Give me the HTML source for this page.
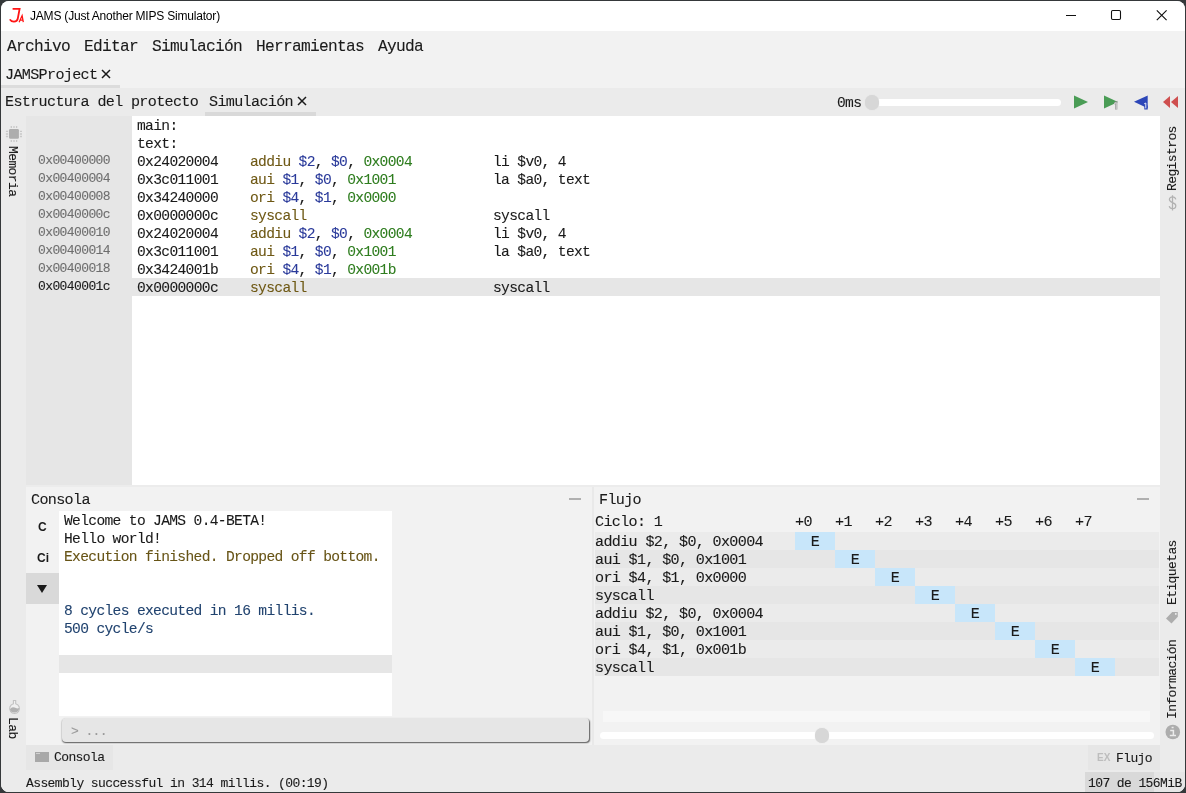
<!DOCTYPE html>
<html><head><meta charset="utf-8">
<style>
*{box-sizing:border-box;margin:0;padding:0}
html,body{width:1186px;height:793px;overflow:hidden;background:#35383a}
body{font-family:"Liberation Mono",monospace;color:#1a1a1a;position:relative}
.abs{position:absolute}
#win{position:absolute;left:1px;top:1px;width:1184px;height:791px;background:#f2f2f2;border-radius:8px;overflow:hidden}
.t{position:absolute;white-space:pre;line-height:18px;font-size:14.6px;letter-spacing:-0.66px;-webkit-text-stroke:0.1px currentColor;will-change:opacity;margin-top:1px}
.m{font-size:16.2px;letter-spacing:-0.72px}
.l{font-size:15.1px;letter-spacing:-0.66px}
.s{font-size:13px;letter-spacing:-0.6px}
.g{color:#6e6e6e}
.mn{color:#6e5814}.rg{color:#2a3a9a}.im{color:#2f7d1f}
.v{position:absolute;white-space:pre;font-size:13px;letter-spacing:-0.6px;line-height:14px;transform-origin:0 0;will-change:opacity;-webkit-text-stroke:0.1px currentColor}
.e{position:absolute;width:40px;height:18px;background:#c8e6fa;text-align:center;font-size:15.1px;letter-spacing:-0.66px;line-height:20px;overflow:hidden}.e span{will-change:opacity;display:block;-webkit-text-stroke:0.1px currentColor}
.fr{position:absolute;left:594px;width:564px;height:18px}
</style></head><body>
<div id="win">
<!-- title bar -->
<div class="abs" style="left:0;top:0;width:1184px;height:30px;background:#fff"></div>
<div class="abs" style="left:29px;top:7px;font:12px/16px 'Liberation Sans',sans-serif;letter-spacing:-0.2px;color:#000;white-space:pre;will-change:opacity">JAMS (Just Another MIPS Simulator)</div>
<svg class="abs" style="left:6px;top:6px" width="20" height="18" viewBox="0 0 20 18"><path d="M5.6 1.8H12.6L10.9 11Q10.3 14.6 6.9 14.6Q4 14.6 2.8 12.4" fill="none" stroke="#ff1414" stroke-width="1.8" stroke-linejoin="miter"/><path d="M12.1 15.2L15.1 8.6L16.3 15.2M13.2 13.2H16" fill="none" stroke="#ff1414" stroke-width="1.3"/></svg>
<svg class="abs" style="left:1060px;top:5px" width="120" height="20" viewBox="0 0 120 20"><path d="M5 9.5H15" stroke="#111" stroke-width="1.1" fill="none"/><rect x="50.5" y="4.5" width="9" height="9" rx="1.2" fill="none" stroke="#111" stroke-width="1.1"/><path d="M95.8 4.3L105.6 14.1M105.6 4.3L95.8 14.1" stroke="#111" stroke-width="1.15" fill="none"/></svg>
<!-- menu -->
<div class="t m" style="left:6px;top:36px">Archivo</div>
<div class="t m" style="left:83px;top:36px">Editar</div>
<div class="t m" style="left:151px;top:36px">Simulación</div>
<div class="t m" style="left:255px;top:36px">Herramientas</div>
<div class="t m" style="left:377px;top:36px">Ayuda</div>
<!-- project tab -->
<div class="t l" style="left:4px;top:64px">JAMSProject</div>
<svg class="abs" style="left:100px;top:68px" width="10" height="10" viewBox="0 0 10 10"><path d="M1 1L9 9M9 1L1 9" stroke="#1a1a1a" stroke-width="1.5" fill="none"/></svg>
<div class="abs" style="left:0;top:84px;width:119px;height:3px;background:#dcdcdc"></div>
<!-- sim tab bar -->
<div class="abs" style="left:0;top:87px;width:1184px;height:28px;background:#ebebeb"></div>
<div class="t l" style="left:4px;top:91px">Estructura del protecto</div>
<div class="t l" style="left:208px;top:91px">Simulación</div>
<svg class="abs" style="left:296px;top:95px" width="10" height="10" viewBox="0 0 10 10"><path d="M1 1L9 9M9 1L1 9" stroke="#1a1a1a" stroke-width="1.5" fill="none"/></svg>
<div class="abs" style="left:204px;top:111px;width:111px;height:4px;background:#d9d9d9"></div>
<div class="t" style="left:836px;top:92px">0ms</div>
<div class="abs" style="left:866px;top:98px;width:194px;height:7px;border-radius:4px;background:#fff"></div>
<div class="abs" style="left:864px;top:94px;width:14px;height:15px;border-radius:7px;background:#d7d7d7;box-shadow:0 0 1px #d7d7d7"></div>
<svg class="abs" style="left:1066px;top:90px" width="118" height="22" viewBox="0 0 118 22"><path d="M7 4.5L21 11L7 17.5Z" fill="#4a9c55"/><path d="M37 4.5L51 11L37 17.5Z" fill="#4a9c55"/><path d="M47.2 12.6L49.2 11.6V18.6" stroke="#8e8e8e" stroke-width="2.2" fill="none"/><path d="M47.2 12.6L49.2 11.6V18.4" stroke="#e4e4e4" stroke-width="0.9" fill="none"/><path d="M80.7 4.5L67 10.8L80.7 17.2Z" fill="#2c46b8"/><path d="M77.3 14.5H80.7V18.4H77.3Z" fill="#2c46b8"/><path d="M77.2 12.8L78.8 12V17.4" stroke="#e8ebfa" stroke-width="1" fill="none"/><path d="M103 5L96 11L103 17Z" fill="#cf4f4f"/><path d="M111 5L104 11L111 17Z" fill="#cf4f4f"/></svg>
<!-- main -->
<div class="abs" style="left:0;top:115px;width:25px;height:676px;background:#ebebeb"></div>
<div class="abs" style="left:1159px;top:115px;width:25px;height:676px;background:#ebebeb"></div>
<div class="abs" style="left:25px;top:115px;width:106px;height:369px;background:#e6e6e6"></div>
<div class="abs" style="left:131px;top:115px;width:1028px;height:369px;background:#fff"></div>
<div class="abs" style="left:25px;top:484px;width:1134px;height:2px;background:#ececec"></div>
<div class="abs" style="left:591px;top:486px;width:2px;height:258px;background:#e9e9e9"></div>
<div class="abs" style="left:131px;top:277px;width:1028px;height:18px;background:#e6e6e6"></div>
<!-- gutter -->
<div class="t s g" style="left:37px;top:150px">0x00400000
0x00400004
0x00400008
0x0040000c
0x00400010
0x00400014
0x00400018
<span style="color:#1a1a1a">0x0040001c</span></div>
<!-- code -->
<div class="t" style="left:136px;top:115px">main:
text:
0x24020004
0x3c011001
0x34240000
0x0000000c
0x24020004
0x3c011001
0x3424001b
0x0000000c</div>
<div class="t" style="left:249px;top:151px"><span class="mn">addiu</span> <span class="rg">$2</span>, <span class="rg">$0</span>, <span class="im">0x0004</span>
<span class="mn">aui</span> <span class="rg">$1</span>, <span class="rg">$0</span>, <span class="im">0x1001</span>
<span class="mn">ori</span> <span class="rg">$4</span>, <span class="rg">$1</span>, <span class="im">0x0000</span>
<span class="mn">syscall</span>
<span class="mn">addiu</span> <span class="rg">$2</span>, <span class="rg">$0</span>, <span class="im">0x0004</span>
<span class="mn">aui</span> <span class="rg">$1</span>, <span class="rg">$0</span>, <span class="im">0x1001</span>
<span class="mn">ori</span> <span class="rg">$4</span>, <span class="rg">$1</span>, <span class="im">0x001b</span>
<span class="mn">syscall</span></div>
<div class="t" style="left:492px;top:151px">li $v0, 4
la $a0, text

syscall
li $v0, 4
la $a0, text

syscall</div>
<!-- side labels -->
<div class="v" style="left:18px;top:145px;transform:rotate(90deg)">Memoria</div>
<div class="v" style="left:18px;top:716px;transform:rotate(90deg)">Lab</div>
<div class="v" style="left:1165px;top:190px;transform:rotate(-90deg)">Registros</div>
<div class="v" style="left:1165px;top:604px;transform:rotate(-90deg)">Etiquetas</div>
<div class="v" style="left:1165px;top:718px;transform:rotate(-90deg)">Información</div>
<!-- side icons -->
<svg class="abs" style="left:4px;top:123px" width="20" height="20" viewBox="0 0 20 20"><rect x="4.05" y="5" width="9.85" height="9.85" rx="1.3" fill="#adadad"/><g stroke="#c9c9c9" stroke-width="1.3" fill="none"><path d="M6.3 2.1V4M9 2.1V4M11.6 2.1V4M6.3 16V18M9 16V18M11.6 16V18M0.9 7.4H3.1M0.9 10H3.1M0.9 12.5H3.1M14.9 7.4H17M14.9 10H17M14.9 12.5H17"/></g></svg>
<svg class="abs" style="left:5px;top:697px" width="18" height="20" viewBox="0 0 18 20"><path d="M7.4 2.5H9.7V5.8A4.9 4.9 0 1 1 7.4 5.8Z" fill="#f0f0f0" stroke="#c2c2c2" stroke-width="1.1"/><path d="M3.9 11.3Q6 8.2 8.5 9.6T13.2 10A4.8 4.8 0 0 1 3.9 11.3Z" fill="#b2b2b2"/></svg>
<svg class="abs" style="left:1163px;top:191px" width="16" height="22" viewBox="0 0 16 22"><path d="M11.8 7.4C11.3 5.6 10 4.9 8.5 4.9C6.6 4.9 5.4 6 5.4 7.6C5.4 9.4 6.8 10 8.6 10.7C10.4 11.4 11.8 12.1 11.8 13.8C11.8 15.6 10.4 16.7 8.5 16.7C6.8 16.7 5.6 15.8 5.2 14.2M8.5 3.3V18.6" fill="none" stroke="#b2b2b2" stroke-width="1.25"/></svg>
<svg class="abs" style="left:1159px;top:603px" width="24" height="24" viewBox="0 0 24 24"><path d="M6 14.4L12.2 8H17.8V12.8L11.5 19.5Z" fill="#adadad"/><circle cx="15.8" cy="9.9" r="0.9" fill="#f4f4f4"/></svg>
<svg class="abs" style="left:1159px;top:719px" width="24" height="24" viewBox="0 0 24 24"><circle cx="12.8" cy="12" r="7.3" fill="#adadad"/><path d="M11.6 7.6H13.6M10.2 10.4H13.4V15.2M9.8 15.6H16" stroke="#ececec" stroke-width="1.5" fill="none"/></svg>
<!-- console panel -->
<div class="t l" style="left:30px;top:489px">Consola</div>
<div class="abs" style="left:568px;top:497px;width:12px;height:2px;background:#b0b0b0"></div>
<div class="abs" style="left:25px;top:572px;width:33px;height:31px;background:#d9d9d9"></div>
<div class="abs" style="left:58px;top:510px;width:333px;height:205px;background:#fff"></div>
<div class="abs" style="left:58px;top:654px;width:333px;height:18px;background:#e6e6e6"></div>
<div class="abs" style="left:37px;top:518px;font:bold 12px/16px 'Liberation Sans',sans-serif;will-change:opacity">C</div>
<div class="abs" style="left:36px;top:549px;font:bold 12px/16px 'Liberation Sans',sans-serif;will-change:opacity">Ci</div>
<svg class="abs" style="left:36px;top:584px" width="10" height="8" viewBox="0 0 10 8"><path d="M0 0H10L5 8Z" fill="#1a1a1a"/></svg>
<div class="t" style="left:63px;top:510px">Welcome to JAMS 0.4-BETA!
Hello world!
<span style="color:#675416">Execution finished. Dropped off bottom.</span>


<span style="color:#21436f">8 cycles executed in 16 millis.
500 cycle/s</span></div>
<div class="abs" style="left:61px;top:717px;width:527px;height:24px;background:#e6e6e6;border-radius:4px;box-shadow:0.5px 1px 1.5px rgba(0,0,0,0.65)"></div>
<div class="t s" style="left:70px;top:721px;color:#9a9a9a">&gt; ...</div>
<!-- flujo panel -->
<div class="t l" style="left:598px;top:489px">Flujo</div>
<div class="abs" style="left:1136px;top:497px;width:12px;height:2px;background:#b0b0b0"></div>
<div class="t l" style="left:594px;top:511px">Ciclo: 1</div>
<div class="t l" style="left:794px;top:511px">+0</div>
<div class="t l" style="left:834px;top:511px">+1</div>
<div class="t l" style="left:874px;top:511px">+2</div>
<div class="t l" style="left:914px;top:511px">+3</div>
<div class="t l" style="left:954px;top:511px">+4</div>
<div class="t l" style="left:994px;top:511px">+5</div>
<div class="t l" style="left:1034px;top:511px">+6</div>
<div class="t l" style="left:1074px;top:511px">+7</div>
<div class="fr" style="top:531px;background:#ebebeb"></div>
<div class="fr" style="top:549px;background:#e6e6e6"></div>
<div class="fr" style="top:567px;background:#ebebeb"></div>
<div class="fr" style="top:585px;background:#e6e6e6"></div>
<div class="fr" style="top:603px;background:#ebebeb"></div>
<div class="fr" style="top:621px;background:#e6e6e6"></div>
<div class="fr" style="top:639px;background:#ebebeb"></div>
<div class="fr" style="top:657px;background:#e6e6e6"></div>
<div class="t l" style="left:594px;top:531px">addiu $2, $0, 0x0004
aui $1, $0, 0x1001
ori $4, $1, 0x0000
syscall
addiu $2, $0, 0x0004
aui $1, $0, 0x1001
ori $4, $1, 0x001b
syscall</div>
<div class="e" style="left:794px;top:531px"><span>E</span></div>
<div class="e" style="left:834px;top:549px"><span>E</span></div>
<div class="e" style="left:874px;top:567px"><span>E</span></div>
<div class="e" style="left:914px;top:585px"><span>E</span></div>
<div class="e" style="left:954px;top:603px"><span>E</span></div>
<div class="e" style="left:994px;top:621px"><span>E</span></div>
<div class="e" style="left:1034px;top:639px"><span>E</span></div>
<div class="e" style="left:1074px;top:657px"><span>E</span></div>
<div class="abs" style="left:602px;top:710px;width:547px;height:11px;background:#f7f7f7"></div>
<div class="abs" style="left:599px;top:731px;width:554px;height:7px;border-radius:4px;background:#fff"></div>
<div class="abs" style="left:814px;top:727px;width:14px;height:15px;border-radius:7px;background:#d7d7d7;box-shadow:0 0 1px #d7d7d7"></div>
<!-- bottom tabs -->
<div class="abs" style="left:25px;top:744px;width:1134px;height:25px;background:#ebebeb"></div>
<div class="abs" style="left:25px;top:744px;width:87px;height:25px;background:#e6e6e6"></div>
<div class="abs" style="left:34px;top:751px;width:14px;height:10px;background:#a8a8a8"></div><div class="abs" style="left:35px;top:752px;width:4px;height:1px;background:#d0d0d0"></div>
<div class="t s" style="left:53px;top:747px">Consola</div>
<div class="abs" style="left:1087px;top:744px;width:72px;height:25px;background:#e6e6e6"></div>
<div class="abs" style="left:1096px;top:750px;font:bold 10px/14px 'Liberation Sans',sans-serif;color:#bdbdbd;will-change:opacity">EX</div>
<div class="t s" style="left:1115px;top:748px">Flujo</div>
<!-- status -->
<div class="abs" style="left:0;top:769px;width:1184px;height:22px;background:#ebebeb"></div>
<div class="abs" style="left:1084px;top:771px;width:69px;height:20px;background:#d9d9d9"></div>
<div class="abs" style="left:1153px;top:771px;width:31px;height:20px;background:#e6e6e6"></div>
<div class="t s" style="left:25px;top:773px">Assembly successful in 314 millis. (00:19)</div>
<div class="t s" style="left:1087px;top:773px">107 de 156MiB</div>
</div>
</body></html>
